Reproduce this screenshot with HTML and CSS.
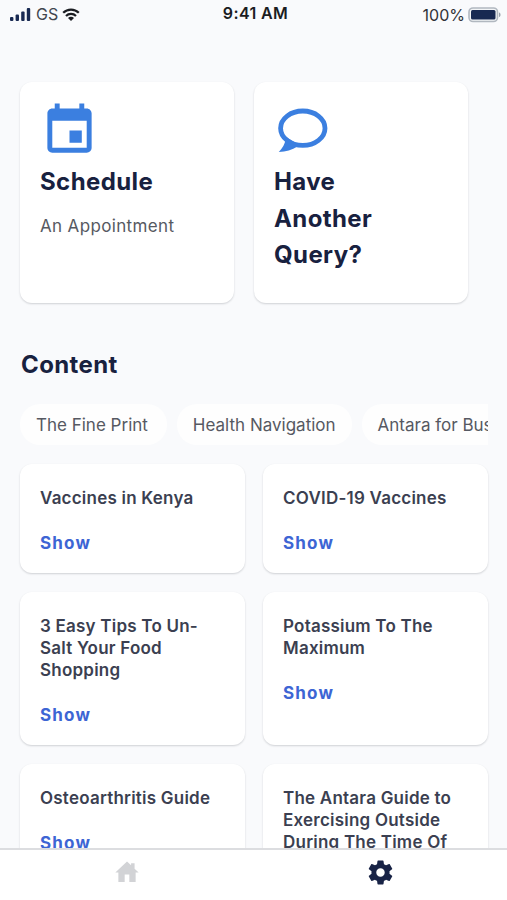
FILE: index.html
```html
<!DOCTYPE html>
<html lang="en">
<head>
<meta charset="utf-8">
<title>Content</title>
<link rel="stylesheet" href="styles.css">
</head>
<body>
<div class="screen">
  <header class="status">
    <div class="status-left">
      <svg class="signal" viewBox="0 0 21 14"><rect x="0" y="10" width="3.4" height="4" rx="1"/><rect x="5.6" y="7.5" width="3.4" height="6.5" rx="1"/><rect x="11.2" y="4.5" width="3.4" height="9.5" rx="1"/><rect x="16.8" y="1" width="3.4" height="13" rx="1"/></svg>
      <span class="carrier">GS</span>
      <svg class="wifi" viewBox="0 0 18 13"><path d="M1.2 4.8a11 11 0 0 1 15.6 0M4 7.9a7 7 0 0 1 10 0" fill="none" stroke="currentColor" stroke-width="2.2"/><path d="M6 10a4.2 4.2 0 0 1 6 0l-3 3z" fill="currentColor"/></svg>
    </div>
    <div class="time">9:41 AM</div>
    <div class="status-right">
      <span>100%</span>
      <svg class="battery" viewBox="0 0 33 16"><rect x="1" y="1" width="28.5" height="13.5" rx="4" fill="#f2f4f6" stroke="#b1b8c0" stroke-width="1.6"/><rect x="3" y="3" width="24.5" height="9.5" rx="1.5" fill="#182952"/><path d="M31 5.5c2 .5 2 4 0 4.5z" fill="#9aa2ad"/></svg>
    </div>
  </header>
  <main class="content">
    <section class="actions">
      <article class="card action">
        <svg class="calendar" viewBox="0 0 24 24"><path d="M17 12h-5v5h5v-5zM16 1v2H8V1H6v2H5c-1.11 0-1.99.9-1.99 2L3 19c0 1.1.89 2 2 2h14c1.1 0 2-.9 2-2V5c0-1.1-.9-2-2-2h-1V1h-2zm3 18H5V8h14v11z"/></svg>
        <h2>Schedule</h2>
        <p>An Appointment</p>
      </article>
      <article class="card action">
        <svg class="bubble" viewBox="0 0 59 59"><ellipse cx="28.8" cy="27.2" rx="22.2" ry="17.2" fill="none" stroke="#3b7fe0" stroke-width="4.8"/><path d="M11.500 38.500C11 43 8.500 47 4.800 51C12 50.500 18 49 23.500 45.500L21 41.500L13 36.500z"/></svg>
        <h2>Have Another Query?</h2>
      </article>
    </section>
    <h2 class="heading">Content</h2>
    <nav class="chips">
      <span class="chip">The Fine Print</span>
      <span class="chip">Health Navigation</span>
      <span class="chip">Antara for Business</span>
    </nav>
    <section class="articles">
      <article class="card article"><h3>Vaccines in Kenya</h3><a>Show</a></article>
      <article class="card article"><h3>COVID-19 Vaccines</h3><a>Show</a></article>
      <article class="card article"><h3>3 Easy Tips To Un-Salt Your Food Shopping</h3><a>Show</a></article>
      <article class="card article"><h3>Potassium To The Maximum</h3><a>Show</a></article>
      <article class="card article"><h3>Osteoarthritis Guide</h3><a>Show</a></article>
      <article class="card article"><h3>The Antara Guide to Exercising Outside During The Time Of COVID-19</h3><a>Show</a></article>
    </section>
  </main>
  <nav class="tabs">
    <div class="tab"><svg class="home" viewBox="0 0 24 24"><path d="M10 20.600v-6.400h4v6.400h5.400v-8.200H22l-3.500-3.200V4.500H15.500v1.800L12 3 2 12.400h2.600v8.200z"/></svg></div>
    <div class="tab"><svg class="gear" viewBox="0 0 24 24"><path d="M19.430 12.980c.040-.320.070-.640.070-.980s-.030-.660-.070-.980l2.110-1.650c.190-.150.240-.420.120-.640l-2-3.460c-.120-.220-.390-.300-.610-.220l-2.490 1c-.520-.400-1.080-.730-1.690-.980l-.380-2.650C14.460 2.180 14.250 2 14 2h-4c-.250 0-.460.180-.490.420l-.380 2.650c-.610.250-1.170.590-1.690.980l-2.490-1c-.230-.090-.490 0-.610.220l-2 3.460c-.130.220-.070.490.120.640l2.110 1.650c-.040.320-.070.650-.070.980s.030.660.070.980l-2.110 1.650c-.190.150-.240.420-.120.640l2 3.460c.120.220.390.300.610.220l2.490-1c.520.400 1.080.730 1.690.980l.380 2.650c.030.240.240.420.490.420h4c.250 0 .460-.180.490-.420l.380-2.650c.610-.250 1.170-.590 1.690-.980l2.490 1c.230.090.490 0 .610-.220l2-3.460c.120-.220.070-.490-.120-.640l-2.110-1.650zM12 15.500c-1.930 0-3.500-1.570-3.500-3.500s1.570-3.500 3.500-3.500 3.500 1.570 3.500 3.500-1.570 3.500-3.500 3.500z"/></svg></div>
  </nav>
</div>
</body>
</html>
```
FILE: styles.css
```css
* { box-sizing: border-box; }
body { margin: 0; font-family: Inter, "Liberation Sans", sans-serif; background: #f9fafc; }
h2, h3, p { margin: 0; }
svg { display: block; flex: none; }
.screen { height: 900px; display: flex; flex-direction: column; overflow: hidden; }
.status { flex: none; height: 28px; padding: 0 6px 0 10px; display: grid; grid-template-columns: 1fr auto 1fr; align-items: center; color: #42464f; font-size: 16px; }
.status-left, .status-right { display: flex; align-items: center; }
.status-right { justify-content: flex-end; gap: 3px; padding-top: 1px; color: #303238; }
.signal { width: 21px; height: 14px; fill: #182952; }
.carrier { margin: 0 4px 0 5px; }
.wifi { width: 18px; height: 13px; color: #1b1d22; }
.time { color: #1b1d22; font-weight: 600; letter-spacing: .4px; padding-bottom: 2px; }
.battery { width: 33px; height: 16px; }
.content { flex: 1; min-height: 0; overflow: hidden; padding: 54px 19px 0 20px; }
.card { background: #fff; border-radius: 12px; box-shadow: 0 1px 2px rgba(30, 35, 50, .19); }
.actions { display: flex; gap: 20px; }
.action { width: 214px; height: 221px; padding: 19px 20px; }
.action svg { width: 59px; height: 59px; fill: #3b7fe0; }
.action h2 { width: 130px; margin-top: 4px; font-size: 24px; line-height: 36.6px; font-weight: 700; letter-spacing: .4px; color: #18213f; }
.action p { margin-top: 14px; font-size: 17px; line-height: 22px; letter-spacing: .35px; color: #565962; }
.heading { margin: 44px 0 0 1px; font-size: 24px; line-height: 36px; letter-spacing: .4px; color: #18213f; }
.chips { display: flex; gap: 10px; margin-top: 21px; overflow: hidden; }
.chip { flex: none; height: 41px; padding: 1px 16px 0; border-radius: 20px; background: #fefefe; color: #565962; font-size: 17px; line-height: 41px; white-space: nowrap; }
.chip:first-child { padding-right: 19px; }
.articles { display: grid; grid-template-columns: 225px 225px; column-gap: 18px; row-gap: 19px; margin-top: 19px; }
.article { padding: 23px 20px 19.6px; }
.article h3 { font-size: 17px; line-height: 22px; font-weight: 600; letter-spacing: .22px; color: #3b3f51; }
.article a { display: block; margin-top: 22.6px; font-size: 17px; line-height: 22px; font-weight: 700; letter-spacing: 1.2px; color: #3d65d4; }
.tabs { flex: none; height: 52px; display: flex; background: #fff; border-top: 2px solid #dcdde0; }
.tab { flex: 1; display: flex; justify-content: center; padding-top: 8px; }
.home { width: 28px; height: 28px; fill: #d2d3d6; }
.gear { width: 29px; height: 29px; fill: #182346; }
```
